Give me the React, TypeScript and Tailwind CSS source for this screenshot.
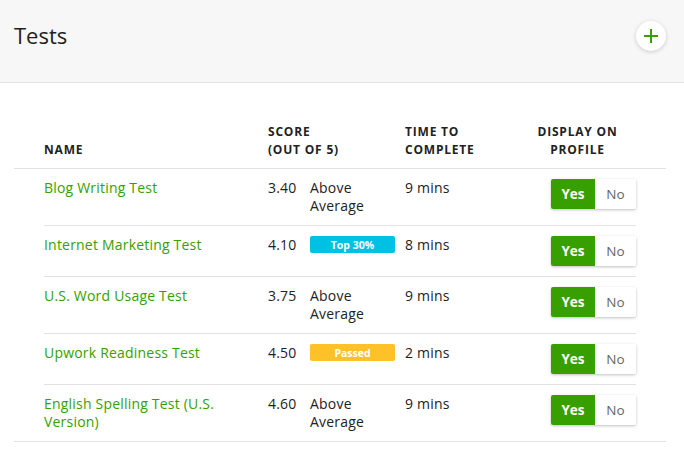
import React from "react";

type Row = {
  name: string;
  score: string;
  label?: string;
  badge?: { text: string; color: "cyan" | "yellow" };
  time: string;
};

const rows: Row[] = [
  { name: "Blog Writing Test", score: "3.40", label: "Above Average", time: "9 mins" },
  { name: "Internet Marketing Test", score: "4.10", badge: { text: "Top 30%", color: "cyan" }, time: "8 mins" },
  { name: "U.S. Word Usage Test", score: "3.75", label: "Above Average", time: "9 mins" },
  { name: "Upwork Readiness Test", score: "4.50", badge: { text: "Passed", color: "yellow" }, time: "2 mins" },
  { name: "English Spelling Test (U.S. Version)", score: "4.60", label: "Above Average", time: "9 mins" },
];

function Toggle() {
  return (
    <div className="flex h-[30px] w-[85px] rounded-[2px] shadow-[0_1px_3px_rgba(0,0,0,0.25)] overflow-hidden text-[13.5px]">
      <div className="w-[44px] bg-[#37a000] text-white font-bold flex items-center justify-center">Yes</div>
      <div className="flex-1 bg-white text-[#656565] flex items-center justify-center">No</div>
    </div>
  );
}

export default function App() {
  return (
    <div className="w-[684px] h-[463px] bg-white text-[#222] font-['Open_Sans',sans-serif] overflow-hidden">
      <div className="h-[83px] bg-[#f7f7f7] border-b border-[#e2e2e2] flex items-center justify-between pl-[14px] pr-[18px]">
        <h2 className="text-[22px] leading-none font-normal text-[#222] -mt-[13px]">Tests</h2>
        <button className="w-[30px] h-[30px] rounded-full bg-white shadow-[0_1px_4px_rgba(0,0,0,0.18)] flex items-center justify-center -mt-[10px]">
          <svg width="16" height="16" viewBox="0 0 16 16">
            <path d="M8 1v14M1 8h14" stroke="#37a000" strokeWidth="2" fill="none" />
          </svg>
        </button>
      </div>

      <div className="ml-[14px] w-[652px] mt-[40px] border-b border-[#e2e2e2]">
        <div className="border-b border-[#e2e2e2] px-[30px] pb-[9px] flex items-end text-[12px] font-bold uppercase tracking-[0.8px] leading-[18px]">
          <div className="w-[224px]">Name</div>
          <div className="w-[137px]">
            <div>Score</div>
            <div>(out of 5)</div>
          </div>
          <div className="w-[114px]">
            <div>Time to</div>
            <div>Complete</div>
          </div>
          <div className="flex-1 text-center">
            <div>Display on</div>
            <div>Profile</div>
          </div>
        </div>

        <div className="px-[30px]">
          {rows.map((r, i) => (
            <div
              key={r.name}
              className={`flex items-start pt-[10px] pb-[10px] text-[14px] tracking-[0.2px] leading-[18px] ${
                i < rows.length - 1 ? "border-b border-[#e2e2e2]" : ""
              }`}
            >
              <div className="w-[224px] pr-[20px] text-[#37a000]">{r.name}</div>
              <div className="w-[42px]">{r.score}</div>
              <div className="w-[95px]">
                {r.label ? (
                  <div className="w-[75px]">{r.label}</div>
                ) : r.badge ? (
                  <div
                    className={`h-[17px] w-[85px] rounded-[2px] flex items-center justify-center text-white font-bold text-[10.5px] tracking-normal ${
                      r.badge.color === "cyan" ? "bg-[#00c1e4]" : "bg-[#fec228]"
                    }`}
                  >
                    {r.badge.text}
                  </div>
                ) : null}
              </div>
              <div className="flex-1">{r.time}</div>
              <div className="w-[85px] tracking-normal">
                <Toggle />
              </div>
            </div>
          ))}
        </div>
      </div>
    </div>
  );
}
